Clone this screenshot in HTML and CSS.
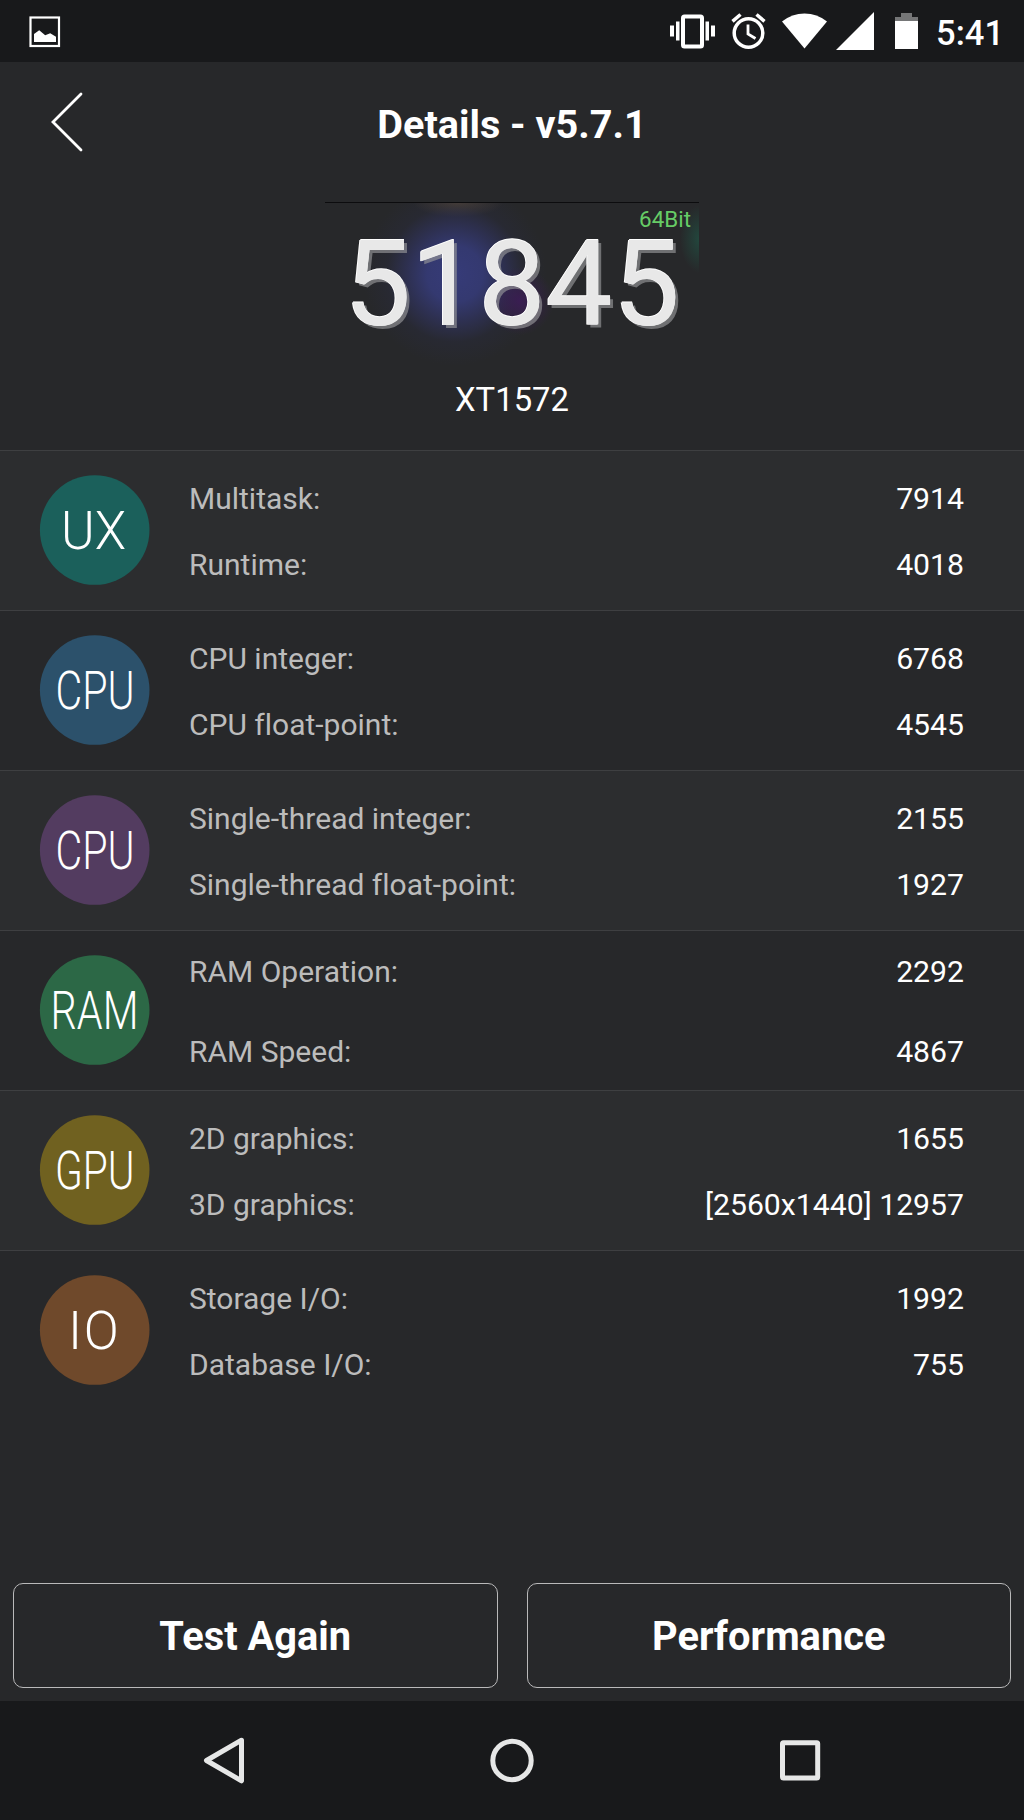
FILE: index.html
```html
<!DOCTYPE html>
<html lang="en">
  <head>
    <meta charset="utf-8">
    <title>Details</title>
    <link rel="stylesheet" href="styles.css">
  </head>
  <body>
    <div class="status-bar">
      <svg class="status-picture" width="31" height="31" viewBox="0 0 31 31">
        <rect x="1.500" y="1.500" width="28.500" height="28.500" fill="none" stroke="#fff" stroke-width="2.200"/>
        <path d="M5 26v-8l5.200-3.800 6 5 5-2 5.800 3.500V26z" fill="#fff"/>
      </svg>
      <div class="status-icons">
        <svg width="45" height="35" viewBox="0 0 45 35" fill="#fff">
          <path d="M0 11.500h4v11H0zM6 7.500h3.500v19H6zM35.500 7.500H39v19h-3.500zM41 11.500h4v11h-4z"/>
          <rect x="13" y="2.500" width="19" height="30" rx="1.500" fill="none" stroke="#fff" stroke-width="4"/>
        </svg>
        <svg class="icon-alarm" width="36" height="36" viewBox="0 0 36 36" fill="none" stroke="#fff">
          <circle cx="17.500" cy="20" r="14.300" stroke-width="3.500"/>
          <path d="M17 11.500V21l7.500 4.500" stroke-width="2.800"/>
          <path d="M1.500 8.300l8-6.800M33.500 8.300l-8-6.800" stroke-width="3.500"/>
        </svg>
        <svg class="icon-wifi" width="45" height="36" viewBox="0 0 45 36" fill="#fff">
          <path d="M22.500 35.500L0 8.500Q10 .5 22.500 .5T45 8.500z"/>
        </svg>
        <svg class="icon-signal" width="38" height="38" viewBox="0 0 38 38" fill="#fff">
          <path d="M0 38L38 0v38z"/>
        </svg>
        <svg class="icon-battery" width="23" height="36" viewBox="0 0 23 36">
          <path d="M0 4h6V0h11v4h6v4H0z" fill="#757677"/>
          <path d="M0 8h23v28H0z" fill="#fff"/>
        </svg>
        <span class="clock">5:41</span>
      </div>
    </div>

    <div class="header">
      <svg class="back" width="34" height="62" viewBox="0 0 34 62">
        <path d="M31 3L3 31l28 28" fill="none" stroke="#fff" stroke-width="2.800" stroke-linecap="round"/>
      </svg>
      <div class="title">Details - v5.7.1</div>
    </div>

    <div class="score">
      <div class="bits">64Bit</div>
      <div class="score-value">51845</div>
    </div>
    <div class="device">XT1572</div>

    <div class="results">
      <div class="row">
        <svg class="badge" viewBox="0 0 110 110">
          <circle class="ux" cx="54.700" cy="55" r="54.800"/>
          <text x="21" y="74" textLength="65" lengthAdjust="spacingAndGlyphs">UX</text>
        </svg>
        <div class="items">
          <div class="item"><span>Multitask:</span><b>7914</b></div>
          <div class="item"><span>Runtime:</span><b>4018</b></div>
        </div>
      </div>
      <div class="row">
        <svg class="badge" viewBox="0 0 110 110">
          <circle class="cpu" cx="54.700" cy="55" r="54.800"/>
          <text x="15.500" y="74" textLength="79" lengthAdjust="spacingAndGlyphs">CPU</text>
        </svg>
        <div class="items">
          <div class="item"><span>CPU integer:</span><b>6768</b></div>
          <div class="item"><span>CPU float-point:</span><b>4545</b></div>
        </div>
      </div>
      <div class="row">
        <svg class="badge" viewBox="0 0 110 110">
          <circle class="single" cx="54.700" cy="55" r="54.800"/>
          <text x="15.500" y="74" textLength="79" lengthAdjust="spacingAndGlyphs">CPU</text>
        </svg>
        <div class="items">
          <div class="item"><span>Single-thread integer:</span><b>2155</b></div>
          <div class="item"><span>Single-thread float-point:</span><b>1927</b></div>
        </div>
      </div>
      <div class="row">
        <svg class="badge" viewBox="0 0 110 110">
          <circle class="ram" cx="54.700" cy="55" r="54.800"/>
          <text x="10.500" y="74" textLength="88" lengthAdjust="spacingAndGlyphs">RAM</text>
        </svg>
        <div class="items wide">
          <div class="item"><span>RAM Operation:</span><b>2292</b></div>
          <div class="item"><span>RAM Speed:</span><b>4867</b></div>
        </div>
      </div>
      <div class="row">
        <svg class="badge" viewBox="0 0 110 110">
          <circle class="gpu" cx="54.700" cy="55" r="54.800"/>
          <text x="15" y="74" textLength="79.500" lengthAdjust="spacingAndGlyphs">GPU</text>
        </svg>
        <div class="items">
          <div class="item"><span>2D graphics:</span><b>1655</b></div>
          <div class="item"><span>3D graphics:</span><b>[2560x1440] 12957</b></div>
        </div>
      </div>
      <div class="row">
        <svg class="badge" viewBox="0 0 110 110">
          <circle class="io" cx="54.700" cy="55" r="54.800"/>
          <text x="28" y="74">I<tspan dx="1.500" textLength="35" lengthAdjust="spacingAndGlyphs">O</tspan></text>
        </svg>
        <div class="items">
          <div class="item"><span>Storage I/O:</span><b>1992</b></div>
          <div class="item"><span>Database I/O:</span><b>755</b></div>
        </div>
      </div>
    </div>

    <div class="buttons">
      <button class="button">Test Again</button>
      <button class="button">Performance</button>
    </div>

    <div class="nav-bar">
      <svg width="48" height="48" viewBox="0 0 48 48">
        <path d="M42.500 3.200L7.500 23.500l35 20.300z"/>
      </svg>
      <svg width="48" height="48" viewBox="0 0 48 48">
        <circle cx="24" cy="23.500" r="19.200"/>
      </svg>
      <svg width="48" height="48" viewBox="0 0 48 48">
        <rect x="5.500" y="5.800" width="35.200" height="35.200" rx="1"/>
      </svg>
    </div>
  </body>
</html>
```

FILE: styles.css
```css
* {
  box-sizing: border-box;
}
body {
  margin: 0;
  height: 1820px;
  display: flex;
  flex-direction: column;
  background-color: #27282a;
  color: #fff;
  font-family: Roboto, sans-serif;
  font-variant-ligatures: none;
}
svg {
  display: block;
  flex: none;
  overflow: visible;
}
.status-bar {
  height: 62px;
  padding: 0 20px 0 29px;
  display: flex;
  justify-content: space-between;
  align-items: center;
  background-color: #18191b;
}
.status-icons {
  display: flex;
  align-items: center;
}
.icon-alarm {
  margin-left: 16px;
}
.icon-wifi {
  margin-left: 15px;
}
.icon-signal {
  margin-left: 9px;
}
.icon-battery {
  margin-left: 21px;
}
.clock {
  margin-left: 18px;
  padding-top: 4px;
  font-size: 34.5px;
  font-weight: 500;
  line-height: 40px;
}
.header {
  height: 140px;
  display: grid;
  grid-template-columns: 120px 1fr 120px;
  padding-bottom: 16px;
  align-items: center;
}
.back {
  margin: -4px 0 0 49.5px;
}
.title {
  padding-top: 1px;
  font-size: 39.6px;
  font-weight: bold;
  text-align: center;
}
.score {
  width: 374px;
  height: 168px;
  margin: 0 auto;
  border-top: 1px solid #0c0c0e;
  background-image:
    radial-gradient(circle at 195px 98px, rgba(60, 28, 86, 0.9), rgba(60, 28, 86, 0) 34px),
    radial-gradient(circle at 130px 71px, #363b78 0, #343970 28px, rgba(48, 51, 94, 0.75) 48px, rgba(42, 44, 70, 0.3) 68px, rgba(39, 40, 42, 0) 92px),
    radial-gradient(ellipse 45px 14px at 133px 0, rgba(90, 75, 55, 0.7), rgba(90, 75, 55, 0)),
    radial-gradient(ellipse 20px 34px at 375px 36px, rgba(32, 85, 70, 0.7), rgba(32, 85, 70, 0));
}
.bits {
  height: 29px;
  padding: 4px 8px 0 0;
  color: #66cc66;
  font-size: 22.4px;
  line-height: 25px;
  text-align: right;
}
.score-value {
  color: #e8e8e8;
  font-size: 119.6px;
  line-height: 104px;
  text-align: center;
  text-shadow: -1px 0 0 #fff, 0 -1px 0 #fff, 3px 3px 0 rgba(150, 151, 154, 0.65);
}
.device {
  height: 80px;
  font-size: 32.8px;
  line-height: 60px;
  text-align: center;
}
.results {
  flex: 1;
}
.row {
  height: 160px;
  padding: 0 60px 2px 40px;
  display: flex;
  align-items: center;
  gap: 39px;
  border-top: 1px solid #3e3f41;
}
.row:nth-child(odd) {
  background-color: #2c2d2f;
}
.badge {
  width: 110px;
  height: 110px;
}
.badge text {
  fill: #fff;
  font-size: 53px;
  font-weight: 300;
}
.ux {
  fill: #1b605b;
}
.cpu {
  fill: #2c516b;
}
.single {
  fill: #533c60;
}
.ram {
  fill: #2c6846;
}
.gpu {
  fill: #706120;
}
.io {
  fill: #6f492b;
}
.items {
  flex: 1;
  padding-top: 4px;
}
.item {
  height: 66px;
  display: flex;
  justify-content: space-between;
  align-items: center;
  font-size: 30px;
}
.wide {
  padding-top: 3px;
}
.wide .item {
  height: 80px;
}
.item span {
  color: #bcbcbc;
}
.item b {
  font-size: 30.2px;
  font-weight: normal;
}
.buttons {
  padding: 0 13px 13px;
  display: grid;
  grid-template-columns: 1fr 1fr;
  gap: 29px;
}
.button {
  height: 105px;
  padding: 2px 0 0;
  border: 1px solid #b9b9ba;
  border-radius: 10px;
  background: none;
  color: #fff;
  font-family: inherit;
  font-size: 39.8px;
  font-weight: bold;
}
.nav-bar {
  height: 119px;
  display: flex;
  justify-content: center;
  align-items: center;
  gap: 241px;
  background-color: #18191b;
}
.nav-bar svg {
  fill: none;
  stroke: #e6e7e7;
  stroke-width: 5px;
  stroke-linejoin: round;
}
```
